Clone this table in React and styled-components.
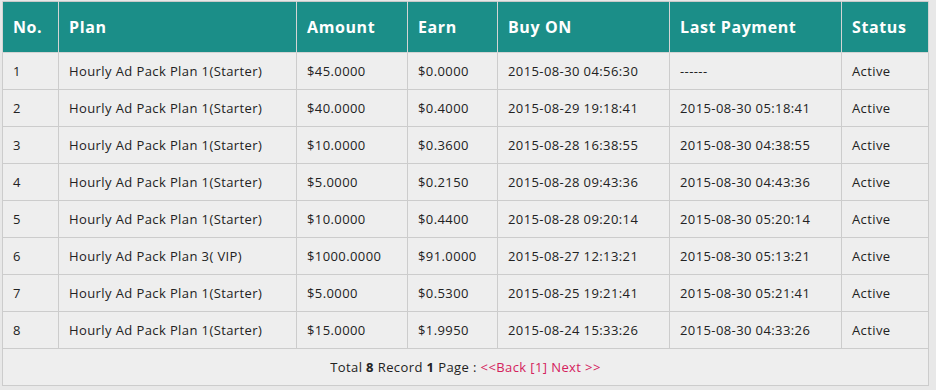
import React from 'react';
import styled, { createGlobalStyle } from 'styled-components';

const GlobalStyle = createGlobalStyle`
  html, body {
    margin: 0;
    padding: 0;
    background: #e8e8e8;
  }
  body {
    font-family: 'Open Sans', 'Liberation Sans', sans-serif;
  }
`;

const Wrapper = styled.div`
  padding: 1px 0 0 2px;
`;

const Table = styled.table`
  width: 926px;
  table-layout: fixed;
  border-collapse: collapse;
  border: 1px solid #c9c9c9;
  background: #eeeeee;
`;

const HeadCell = styled.th`
  height: 51px;
  padding: 0 10px;
  box-sizing: border-box;
  background: #1b8e88;
  color: #fff;
  font-size: 16px;
  font-weight: 700;
  letter-spacing: 0.6px;
  text-align: left;
  border: 1px solid #d4d4d4;
  border-top: none;
`;

const Cell = styled.td`
  height: 37px;
  padding: 0 10px;
  box-sizing: border-box;
  color: #222;
  font-size: 13px;
  letter-spacing: 0.4px;
  border: 1px solid #cccccc;
  white-space: nowrap;
`;

const FooterCell = styled.td`
  height: 37px;
  padding: 0;
  box-sizing: border-box;
  text-align: center;
  font-size: 13px;
  letter-spacing: 0.4px;
  color: #222;
  border: 1px solid #cccccc;
`;

const PageLink = styled.a`
  color: #d4215c;
  text-decoration: none;
`;

const COLS = [56, 238, 111, 90, 172, 172, 87];
const HEADERS = ['No.', 'Plan', 'Amount', 'Earn', 'Buy ON', 'Last Payment', 'Status'];

const rows = [
  ['1', 'Hourly Ad Pack Plan 1(Starter)', '$45.0000', '$0.0000', '2015-08-30 04:56:30', '------', 'Active'],
  ['2', 'Hourly Ad Pack Plan 1(Starter)', '$40.0000', '$0.4000', '2015-08-29 19:18:41', '2015-08-30 05:18:41', 'Active'],
  ['3', 'Hourly Ad Pack Plan 1(Starter)', '$10.0000', '$0.3600', '2015-08-28 16:38:55', '2015-08-30 04:38:55', 'Active'],
  ['4', 'Hourly Ad Pack Plan 1(Starter)', '$5.0000', '$0.2150', '2015-08-28 09:43:36', '2015-08-30 04:43:36', 'Active'],
  ['5', 'Hourly Ad Pack Plan 1(Starter)', '$10.0000', '$0.4400', '2015-08-28 09:20:14', '2015-08-30 05:20:14', 'Active'],
  ['6', 'Hourly Ad Pack Plan 3( VIP)', '$1000.0000', '$91.0000', '2015-08-27 12:13:21', '2015-08-30 05:13:21', 'Active'],
  ['7', 'Hourly Ad Pack Plan 1(Starter)', '$5.0000', '$0.5300', '2015-08-25 19:21:41', '2015-08-30 05:21:41', 'Active'],
  ['8', 'Hourly Ad Pack Plan 1(Starter)', '$15.0000', '$1.9950', '2015-08-24 15:33:26', '2015-08-30 04:33:26', 'Active'],
];

export default function App() {
  return (
    <Wrapper>
      <GlobalStyle />
      <Table>
        <colgroup>
          {COLS.map((w, i) => (
            <col key={i} style={{ width: w }} />
          ))}
        </colgroup>
        <thead>
          <tr>
            {HEADERS.map((h) => (
              <HeadCell key={h}>{h}</HeadCell>
            ))}
          </tr>
        </thead>
        <tbody>
          {rows.map((r) => (
            <tr key={r[0]}>
              {r.map((c, i) => (
                <Cell key={i}>{c}</Cell>
              ))}
            </tr>
          ))}
          <tr>
            <FooterCell colSpan={7}>
              Total <b>8</b> Record <b>1</b> Page : <PageLink href="#">&lt;&lt;Back</PageLink>{' '}
              <PageLink href="#">[1]</PageLink> <PageLink href="#">Next &gt;&gt;</PageLink>
            </FooterCell>
          </tr>
        </tbody>
      </Table>
    </Wrapper>
  );
}
